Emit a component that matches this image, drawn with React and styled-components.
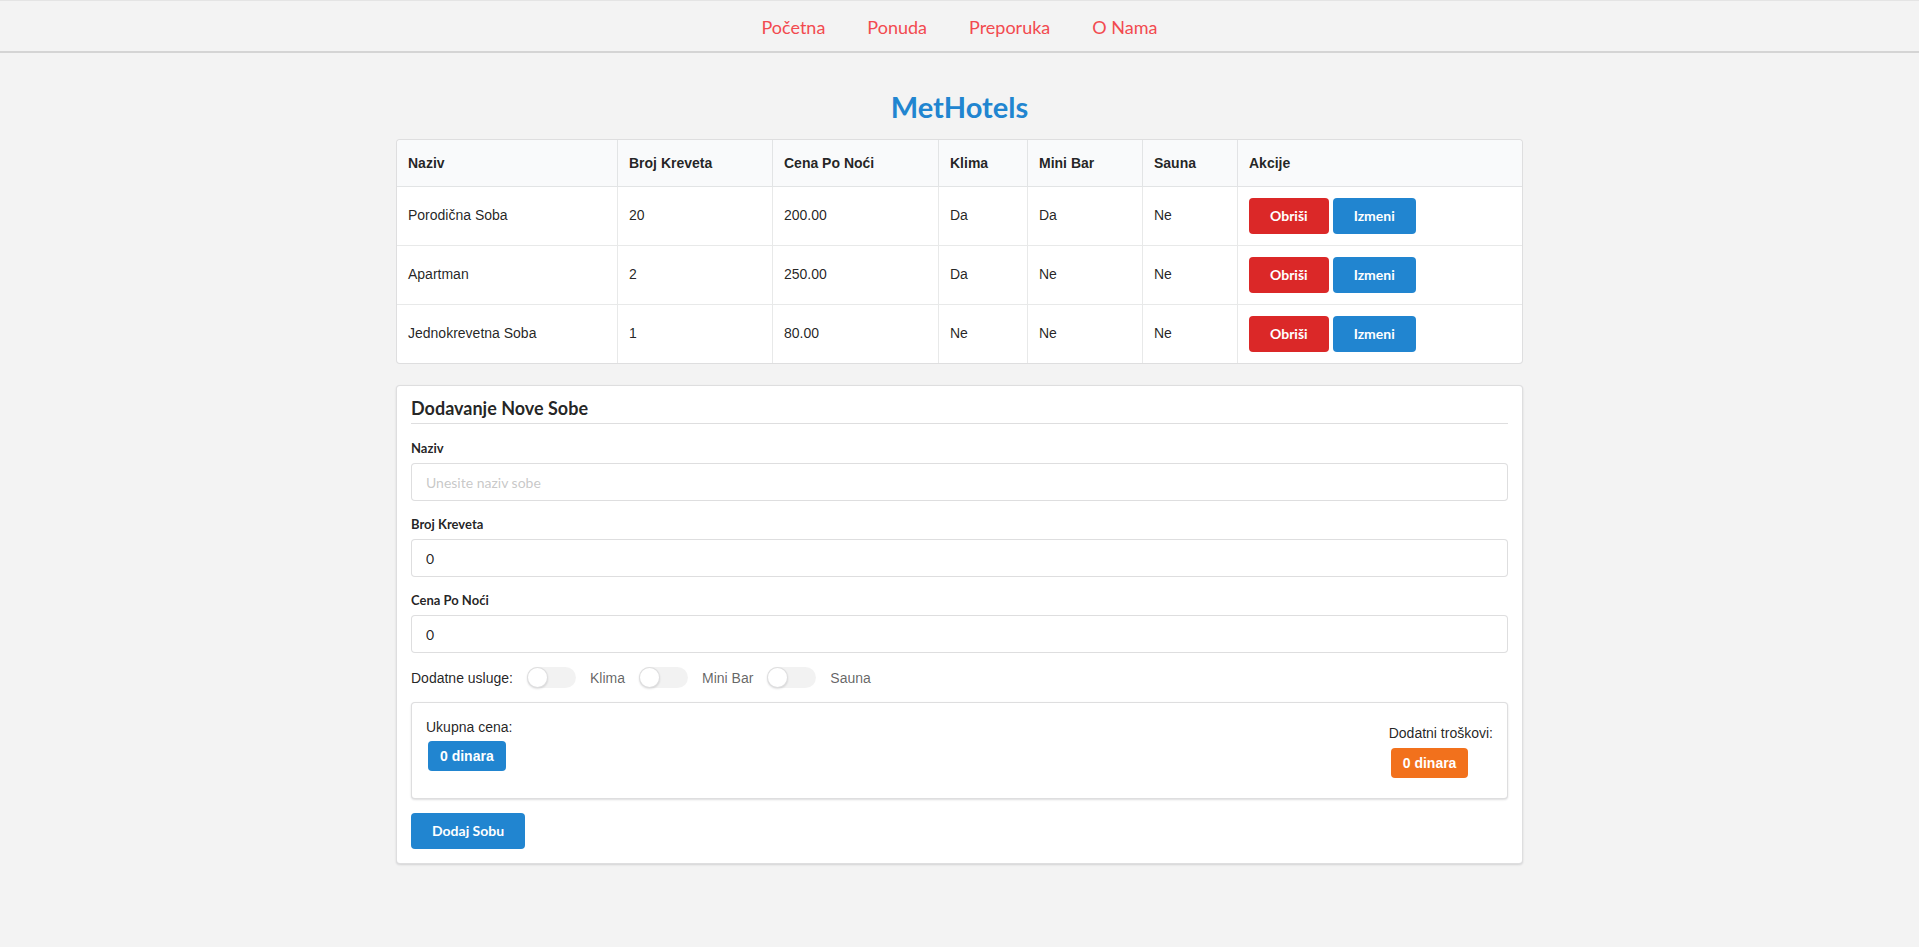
import React from "react";
import styled, { createGlobalStyle } from "styled-components";

const ROOMS = [
  { id: 1, naziv: "Porodična Soba", kreveti: 20, cena: "200.00", klima: "Da", miniBar: "Da", sauna: "Ne" },
  { id: 2, naziv: "Apartman", kreveti: 2, cena: "250.00", klima: "Da", miniBar: "Ne", sauna: "Ne" },
  { id: 3, naziv: "Jednokrevetna Soba", kreveti: 1, cena: "80.00", klima: "Ne", miniBar: "Ne", sauna: "Ne" },
];

const COLUMNS = ["Naziv", "Broj Kreveta", "Cena Po Noći", "Klima", "Mini Bar", "Sauna", "Akcije"];
const COL_WIDTHS = [220, 155, 166, 89, 115, 95, null];

const NAV_LINKS = ["Početna", "Ponuda", "Preporuka", "O Nama"];
const SERVICES = ["Klima", "Mini Bar", "Sauna"];

const COLORS = {
  blue: "#2185d0",
  red: "#db2828",
  orange: "#f2711c",
};

class App extends React.Component {
  render() {
    return (
      <>
        <GlobalStyle />
        <NavBar>
          {NAV_LINKS.map((link) => (
            <NavLink key={link} href="#">
              {link}
            </NavLink>
          ))}
        </NavBar>

        <Container>
          <Title>MetHotels</Title>

          <RoomsTable>
            <colgroup>
              {COL_WIDTHS.map((w, i) => (
                <col key={i} style={w ? { width: w } : undefined} />
              ))}
            </colgroup>
            <thead>
              <tr>
                {COLUMNS.map((c) => (
                  <th key={c}>{c}</th>
                ))}
              </tr>
            </thead>
            <tbody>
              {ROOMS.map((room) => (
                <tr key={room.id}>
                  <td>{room.naziv}</td>
                  <td>{room.kreveti}</td>
                  <td>{room.cena}</td>
                  <td>{room.klima}</td>
                  <td>{room.miniBar}</td>
                  <td>{room.sauna}</td>
                  <td>
                    <Actions>
                      <Button color={COLORS.red}>Obriši</Button>
                      <Button color={COLORS.blue}>Izmeni</Button>
                    </Actions>
                  </td>
                </tr>
              ))}
            </tbody>
          </RoomsTable>

          <Segment>
            <FormHeading>Dodavanje Nove Sobe</FormHeading>

            <Field>
              <Label>Naziv</Label>
              <Input type="text" placeholder="Unesite naziv sobe" />
            </Field>
            <Field>
              <Label>Broj Kreveta</Label>
              <Input type="number" defaultValue="0" />
            </Field>
            <Field>
              <Label>Cena Po Noći</Label>
              <Input type="number" defaultValue="0" />
            </Field>

            <ToggleRow>
              <RowTitle>Dodatne usluge:</RowTitle>
              {SERVICES.map((s) => (
                <Toggle key={s}>
                  <Track />
                  <ToggleText>{s}</ToggleText>
                </Toggle>
              ))}
            </ToggleRow>

            <PriceBox>
              <PriceCol>
                <PriceText>Ukupna cena:</PriceText>
                <Tag color={COLORS.blue}>0 dinara</Tag>
              </PriceCol>
              <PriceCol offset>
                <PriceText>Dodatni troškovi:</PriceText>
                <Tag color={COLORS.orange}>0 dinara</Tag>
              </PriceCol>
            </PriceBox>

            <Button color={COLORS.blue}>Dodaj Sobu</Button>
          </Segment>
        </Container>
      </>
    );
  }
}

export default App;

const GlobalStyle = createGlobalStyle`
  * {
    box-sizing: border-box;
  }

  html,
  body {
    margin: 0;
    padding: 0;
  }

  body {
    min-height: 100vh;
    background: #f3f3f3;
    font-family: "Lato", "Helvetica Neue", Arial, sans-serif;
    font-size: 14px;
    color: rgba(0, 0, 0, 0.87);
  }
`;

const NavBar = styled.nav`
  display: flex;
  justify-content: center;
  gap: 42px;
  height: 53px;
  background: #f3f3f3;
  border-top: 1px solid #e4e4e4;
  border-bottom: 2px solid #d4d4d4;
`;

const NavLink = styled.a`
  padding-top: 1px;
  font-family: "Lato", sans-serif;
  font-size: 18px;
  line-height: 50px;
  color: #f24a4f;
  text-decoration: none;
`;

const Container = styled.main`
  width: 1127px;
  margin: 0 auto;
  padding-bottom: 40px;
`;

const Title = styled.h1`
  margin: 36px 0 14px;
  font-family: "Lato", sans-serif;
  font-size: 29px;
  font-weight: 700;
  line-height: 36px;
  text-align: center;
  color: #2185d0;
`;

const RoomsTable = styled.table`
  width: 100%;
  table-layout: fixed;
  border-collapse: separate;
  border-spacing: 0;
  background: #fff;
  border: 1px solid rgba(34, 36, 38, 0.15);
  border-radius: 4px;
  font-family: "Liberation Sans", Arial, sans-serif;
  font-size: 14px;
  color: rgba(0, 0, 0, 0.87);

  th {
    padding: 13px 11px;
    line-height: 20px;
    font-weight: 700;
    text-align: left;
    background: #f9fafb;
    border-bottom: 1px solid rgba(34, 36, 38, 0.1);
    border-left: 1px solid rgba(34, 36, 38, 0.1);
  }

  th:first-child {
    border-left: none;
    border-radius: 4px 0 0 0;
  }

  th:last-child {
    border-radius: 0 4px 0 0;
  }

  td {
    padding: 10px 11px 12px;
    line-height: 20px;
    vertical-align: middle;
    border-left: 1px solid rgba(34, 36, 38, 0.1);
    border-top: 1px solid rgba(34, 36, 38, 0.1);
  }

  td:last-child {
    padding: 11px;
  }

  td:first-child {
    border-left: none;
  }

  tbody tr:first-child td {
    border-top: none;
  }
`;

const Actions = styled.div`
  display: flex;
  gap: 4px;
`;

const Button = styled.button`
  display: inline-block;
  padding: 11px 21px;
  border: none;
  border-radius: 4px;
  background: ${(p) => p.color};
  color: #fff;
  font-family: "Lato", sans-serif;
  font-size: 14px;
  font-weight: 700;
  line-height: 14px;
  cursor: pointer;
`;

const Segment = styled.section`
  margin-top: 21px;
  padding: 14px;
  background: #fff;
  border: 1px solid rgba(34, 36, 38, 0.15);
  border-radius: 4px;
  box-shadow: 0 1px 2px 0 rgba(34, 36, 38, 0.15);
`;

const FormHeading = styled.h3`
  margin: -2.6px 0 15px;
  padding-bottom: 3px;
  border-bottom: 1px solid rgba(34, 36, 38, 0.15);
  font-family: "Lato", sans-serif;
  font-size: 18px;
  font-weight: 700;
  line-height: 23px;
  color: rgba(0, 0, 0, 0.87);
`;

const Field = styled.div`
  margin-bottom: 14px;
`;

const Label = styled.label`
  display: block;
  margin-bottom: 6px;
  font-family: "Lato", sans-serif;
  font-size: 13px;
  font-weight: 700;
  line-height: 18px;
  color: rgba(0, 0, 0, 0.87);
`;

const Input = styled.input`
  display: block;
  width: 100%;
  height: 38px;
  margin: 0;
  padding: 0 14px;
  background: #fff;
  border: 1px solid rgba(34, 36, 38, 0.15);
  border-radius: 4px;
  font-family: "Lato", sans-serif;
  font-size: 14px;
  line-height: 17px;
  color: rgba(0, 0, 0, 0.87);
  outline: none;
  appearance: textfield;

  &::placeholder {
    color: rgba(191, 191, 191, 0.87);
  }

  &::-webkit-outer-spin-button,
  &::-webkit-inner-spin-button {
    -webkit-appearance: none;
    margin: 0;
  }
`;

const ToggleRow = styled.div`
  display: flex;
  align-items: center;
  gap: 14px;
  height: 21px;
  margin-bottom: 14px;
  font-family: "Liberation Sans", Arial, sans-serif;
  font-size: 14px;
`;

const RowTitle = styled.span`
  color: rgba(0, 0, 0, 0.87);
`;

const Toggle = styled.label`
  display: inline-flex;
  align-items: center;
  gap: 14px;
  cursor: pointer;
`;

const Track = styled.span`
  position: relative;
  display: block;
  width: 49px;
  height: 21px;
  border-radius: 500px;
  background: rgba(0, 0, 0, 0.05);

  &::before {
    content: "";
    position: absolute;
    top: 0;
    left: 0;
    width: 21px;
    height: 21px;
    border-radius: 50%;
    background: #fff;
    box-shadow: 0 1px 2px 0 rgba(34, 36, 38, 0.15),
      0 0 0 1px rgba(34, 36, 38, 0.15) inset;
  }
`;

const ToggleText = styled.span`
  color: rgba(0, 0, 0, 0.62);
`;

const PriceBox = styled.div`
  display: flex;
  justify-content: space-between;
  align-items: flex-start;
  padding: 15px 14px 20px;
  margin-bottom: 14px;
  background: #fff;
  border: 1px solid rgba(34, 36, 38, 0.15);
  border-radius: 4px;
  box-shadow: 0 1px 2px 0 rgba(34, 36, 38, 0.15);
  font-family: "Liberation Sans", Arial, sans-serif;
`;

const PriceCol = styled.div`
  display: flex;
  flex-direction: column;
  align-items: flex-start;
  gap: ${(p) => (p.offset ? "6px" : "4.5px")};
  margin-top: ${(p) => (p.offset ? "6px" : "0")};
`;

const PriceText = styled.span`
  font-size: 14px;
  line-height: 18px;
  color: rgba(0, 0, 0, 0.87);
`;

const Tag = styled.span`
  display: inline-block;
  margin-left: 2px;
  padding: 8px 12px;
  border-radius: 4px;
  background: ${(p) => p.color};
  color: #fff;
  font-size: 14px;
  font-weight: 700;
  line-height: 14px;
`;
